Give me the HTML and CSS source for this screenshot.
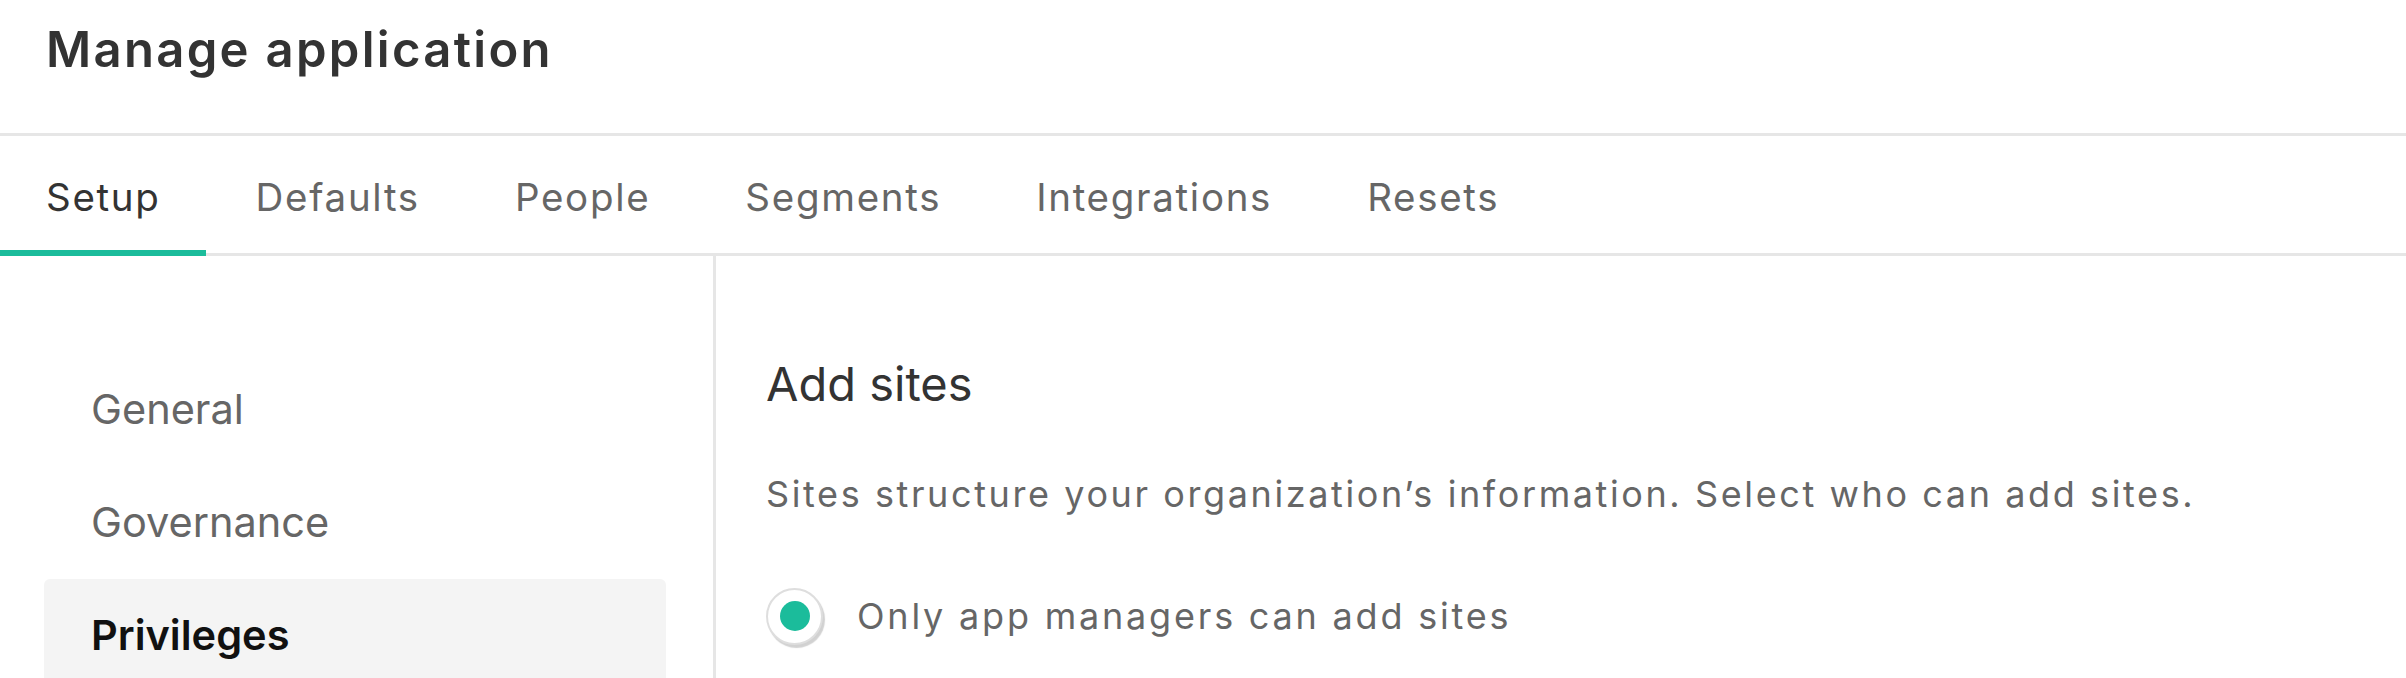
FILE: index.html
```html
<!DOCTYPE html>
<html lang="en">
<head>
<meta charset="utf-8">
<title>Manage application</title>
<link rel="stylesheet" href="styles.css">
</head>
<body>
  <header class="page-header">
    <h1 class="page-title">Manage application</h1>
  </header>
  <nav class="tabs">
    <a class="tab tab--active">Setup</a>
    <a class="tab">Defaults</a>
    <a class="tab">People</a>
    <a class="tab">Segments</a>
    <a class="tab">Integrations</a>
    <a class="tab">Resets</a>
  </nav>
  <div class="layout">
    <aside class="sidebar">
      <a class="side-item">General</a>
      <a class="side-item">Governance</a>
      <a class="side-item side-item--active">Privileges</a>
    </aside>
    <main class="content">
      <h2 class="section-title">Add sites</h2>
      <p class="section-desc">Sites structure your organization’s information. Select who can add sites.</p>
      <label class="radio-row">
        <span class="radio"><span class="radio-dot"></span></span>
        <span class="radio-label">Only app managers can add sites</span>
      </label>
    </main>
  </div>
</body>
</html>
```
FILE: styles.css
```css
* { box-sizing: border-box; }
html, body { margin: 0; padding: 0; background: #fff; }
body {
  font-family: "Inter", "Roboto", "Liberation Sans", sans-serif;
  color: #333;
  height: 678px;
  overflow: hidden;
}
.page-header {
  height: 136px;
  padding: 22px 46px 0;
  border-bottom: 3px solid #e6e6e6;
}
.page-title {
  margin: 0;
  font-size: 49px;
  line-height: 56px;
  font-weight: 600;
  letter-spacing: 2.3px;
  color: #333;
}
.tabs {
  display: flex;
  gap: 4px;
  height: 120px;
  border-bottom: 3px solid #e6e6e6;
}
.tab {
  position: relative;
  padding: 37px 45px 0 46px;
  font-size: 38.5px;
  line-height: 48px;
  letter-spacing: 1.7px;
  color: #666;
  cursor: pointer;
}
.tab--active { color: #333; }
.tab--active::after {
  content: "";
  position: absolute;
  left: 0;
  right: 0;
  bottom: -3px;
  height: 6px;
  background: #1bbc9b;
}
.layout {
  display: flex;
  height: 422px;
}
.sidebar {
  width: 716px;
  flex: none;
  padding: 97px 47px 0 44px;
  border-right: 3px solid #e6e6e6;
  display: flex;
  flex-direction: column;
}
.side-item {
  display: block;
  padding: 26px 47px 27px;
  font-size: 41.5px;
  line-height: 60px;
  color: #666;
  border-radius: 6px;
}
.side-item--active {
  background: #f4f4f4;
  color: #111;
  font-weight: 600;
}
.content {
  flex: 1;
  padding: 100px 0 0 50px;
}
.section-title {
  margin: 0;
  font-size: 47px;
  line-height: 56px;
  font-weight: 400;
  color: #333;
}
.section-desc {
  margin: 58px 0 0;
  font-size: 36px;
  line-height: 48px;
  letter-spacing: 2.6px;
  color: #666;
}
.radio-row {
  margin-top: 74px;
  display: flex;
  align-items: center;
  height: 48px;
}
.radio {
  width: 57px;
  height: 57px;
  border-radius: 50%;
  border: 2px solid #dedede;
  background: #fff;
  box-shadow: 2px 3px 1px rgba(0, 0, 0, 0.18);
  display: flex;
  align-items: center;
  justify-content: center;
  flex: none;
}
.radio-dot {
  width: 30px;
  height: 30px;
  border-radius: 50%;
  background: #1bbc9b;
}
.radio-label {
  margin-left: 34px;
  font-size: 36px;
  line-height: 48px;
  letter-spacing: 2.8px;
  color: #666;
}
```
